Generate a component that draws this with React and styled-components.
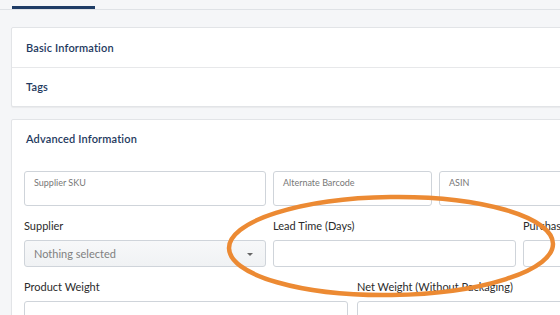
import React from "react";
import styled, { createGlobalStyle } from "styled-components";

const GlobalStyle = createGlobalStyle`
  html, body {
    margin: 0;
    padding: 0;
    background: #f5f6f8;
    overflow: hidden;
  }
  body {
    font-family: "Lato", "Noto Sans", sans-serif;
    color: #333;
  }
`;

const Page = styled.div`
  position: relative;
  width: 820px;
  height: 315px;
  overflow: hidden;
`;

const TabBar = styled.div`
  display: flex;
  height: 9px;
  padding-left: 12px;
  border-bottom: 1px solid #dfe2e6;
`;

const ActiveTab = styled.div`
  width: 83px;
  height: 3px;
  margin-top: 6px;
  background: #1e3c66;
`;

const Content = styled.div`
  display: flex;
  flex-direction: column;
  gap: 12px;
  padding: 17px 0 0 11px;
`;

const Card = styled.div`
  background: #fff;
  border: 1px solid #e2e4e7;
  border-radius: 2px;
  box-shadow: 0 1px 1px rgba(0, 0, 0, 0.05);
`;

const CollapseRow = styled.div`
  display: flex;
  align-items: center;
  height: 38.5px;
  padding: 0 14px;
  font-size: 11px;
  font-weight: 600;
  letter-spacing: 0.15px;
  color: #1f3a60;
  & + & {
    border-top: 1px solid #e7e8ea;
  }
`;

const CardHeader = styled.div`
  padding: 11px 14px 0;
  height: 40px;
  box-sizing: border-box;
  font-size: 11px;
  font-weight: 600;
  letter-spacing: 0.15px;
  color: #1f3a60;
  line-height: 16px;
`;

const CardBody = styled.div`
  display: flex;
  flex-direction: column;
  padding: 11px 12px 0;
`;

const FieldRow = styled.div`
  display: grid;
  grid-template-columns: ${(p) => p.$cols};
  column-gap: ${(p) => p.$gap || 7}px;
  margin-top: ${(p) => p.$top || 0}px;
`;

const Field = styled.div`
  display: flex;
  flex-direction: column;
`;

const Label = styled.div`
  font-size: 11px;
  line-height: 14px;
  color: #2b2b2b;
  margin-bottom: 7px;
  white-space: nowrap;
`;

const FloatBox = styled.div`
  height: 35px;
  box-sizing: border-box;
  border: 1px solid #cfd4da;
  border-radius: 3px;
  background: #fff;
  padding: 5px 9px;
  font-size: 9px;
  line-height: 12px;
  color: #777;
`;

const Input = styled.div`
  height: 27px;
  box-sizing: border-box;
  border: 1px solid #cfd4da;
  border-radius: 3px;
  background: #fff;
`;

const Select = styled.div`
  display: flex;
  align-items: center;
  justify-content: space-between;
  height: 27px;
  box-sizing: border-box;
  padding: 0 12px 0 9px;
  border: 1px solid #cfd4da;
  border-radius: 3px;
  background: linear-gradient(#f7f8f9, #f0f2f4);
  font-size: 11px;
  color: #808080;
`;

const Caret = styled.span`
  width: 0;
  height: 0;
  border-left: 3px solid transparent;
  border-right: 3px solid transparent;
  border-top: 3px solid #666;
  margin-top: 1px;
`;

const Annotation = styled.svg`
  position: absolute;
  left: 0;
  top: 0;
  pointer-events: none;
`;

export default function App() {
  return (
    <>
      <GlobalStyle />
      <Page>
        <TabBar>
          <ActiveTab />
        </TabBar>
        <Content>
          <Card>
            <CollapseRow>Basic Information</CollapseRow>
            <CollapseRow>Tags</CollapseRow>
          </Card>
          <Card>
            <CardHeader>Advanced Information</CardHeader>
            <CardBody>
              <FieldRow $cols="242px 159px 1fr" $gap={7}>
                <FloatBox>Supplier SKU</FloatBox>
                <FloatBox>Alternate Barcode</FloatBox>
                <FloatBox>ASIN</FloatBox>
              </FieldRow>
              <FieldRow $cols="242px 243px 1fr" $gap={7} $top={13}>
                <Field>
                  <Label>Supplier</Label>
                  <Select>
                    Nothing selected
                    <Caret />
                  </Select>
                </Field>
                <Field>
                  <Label>Lead Time (Days)</Label>
                  <Input />
                </Field>
                <Field>
                  <Label>Purchase Price</Label>
                  <Input />
                </Field>
              </FieldRow>
              <FieldRow $cols="324px 1fr" $gap={9} $top={13}>
                <Field>
                  <Label>Product Weight</Label>
                  <Input />
                </Field>
                <Field>
                  <Label>Net Weight (Without Packaging)</Label>
                  <Input />
                </Field>
              </FieldRow>
            </CardBody>
          </Card>
        </Content>
        <Annotation width="560" height="315" viewBox="0 0 560 315">
          <ellipse
            cx="391"
            cy="246"
            rx="162"
            ry="49"
            transform="rotate(-0.8 391 246)"
            fill="none"
            stroke="#ec8a33"
            strokeWidth="4.5"
          />
        </Annotation>
      </Page>
    </>
  );
}
